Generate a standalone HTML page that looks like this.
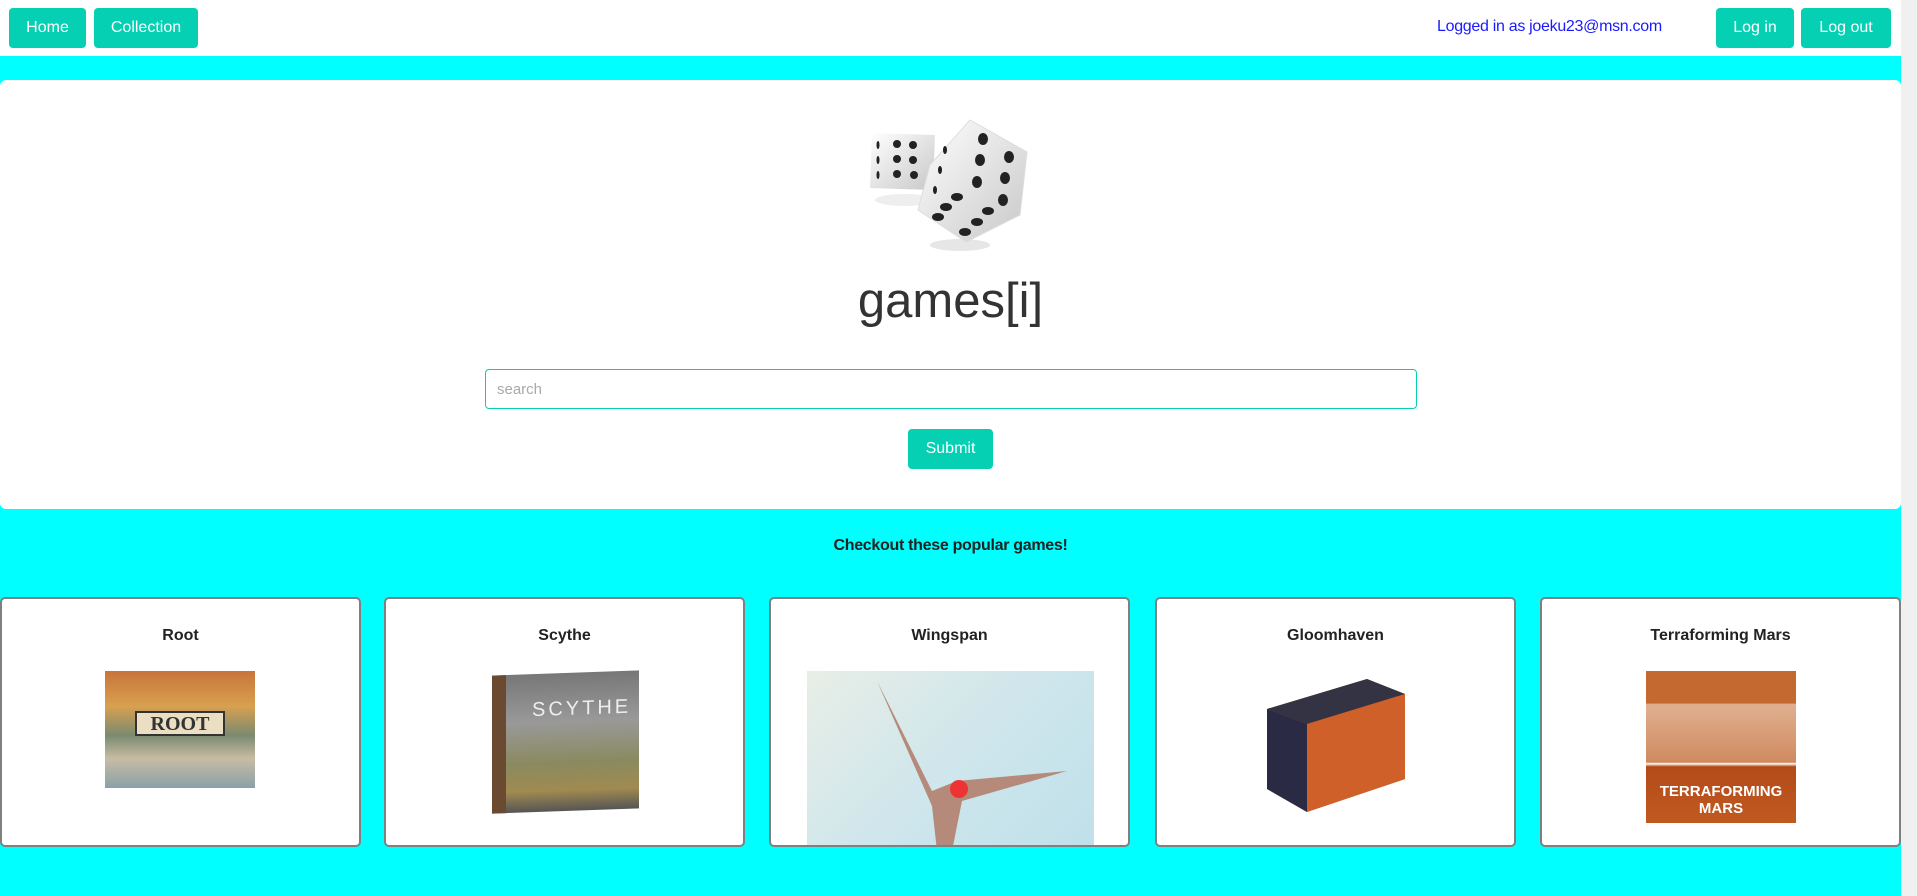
<!DOCTYPE html>
<html><head><meta charset="utf-8"><style>
*{box-sizing:border-box;margin:0;padding:0}
html,body{width:1917px;height:896px;overflow:hidden;font-family:"Liberation Sans",sans-serif;background:#00ffff;position:relative}
.abs{position:absolute}
.nav{left:0;top:0;width:1901px;height:56px;background:#fff}
.btn{position:absolute;background:#05d0b3;color:#fff;border-radius:4px;font-size:16px;display:flex;align-items:center;justify-content:center}
.sb{left:1901px;top:0;width:16px;height:896px;background:#f0f0f0}
.hero{left:0;top:80px;width:1901px;height:429px;background:#fff;border-radius:6px}
.card{position:absolute;top:597px;width:361px;height:250px;background:#fff;border:2px solid #808080;border-radius:5px;overflow:hidden}
.card h3{position:absolute;top:28px;width:100%;text-align:center;font-size:16px;color:#222;font-weight:bold}
.img{position:absolute}
</style></head><body>
<div class="abs nav"></div>
<div class="btn" style="left:9px;top:8px;width:77px;height:40px">Home</div>
<div class="btn" style="left:94px;top:8px;width:104px;height:40px">Collection</div>
<div class="abs" style="left:1437px;top:18px;font-size:16px;color:#1a1aff;white-space:nowrap;letter-spacing:-0.3px">Logged in as joeku23@msn.com</div>
<div class="btn" style="left:1716px;top:8px;width:78px;height:40px">Log in</div>
<div class="btn" style="left:1801px;top:8px;width:90px;height:40px">Log out</div>
<div class="abs sb"></div>
<div class="abs hero"></div>
<svg class="abs" style="left:860px;top:115px" width="180" height="140" viewBox="860 115 180 140">
<defs><linearGradient id="g" x1="0" y1="0" x2="1" y2="1"><stop offset="0" stop-color="#fff"/><stop offset="1" stop-color="#c8c8c8"/></linearGradient></defs>
<ellipse cx="905" cy="200" rx="30" ry="6" fill="#eee"/>
<ellipse cx="960" cy="245" rx="30" ry="6" fill="#e6e6e6"/>
<polygon points="872,133 935,135 933,190 870,188" fill="url(#g)"/>
<g fill="#222"><circle cx="897" cy="144" r="4"/><circle cx="913" cy="145" r="4"/><circle cx="897" cy="159" r="4"/><circle cx="913" cy="160" r="4"/><circle cx="897" cy="174" r="4"/><circle cx="914" cy="175" r="4"/><ellipse cx="878" cy="145" rx="1.5" ry="4"/><ellipse cx="878" cy="160" rx="1.5" ry="4"/><ellipse cx="878" cy="175" rx="1.5" ry="4"/></g>
<polygon points="970,120 1027,152 1020,215 966,242 918,210 930,165" fill="url(#g)" stroke="#ddd"/>
<g fill="#222"><ellipse cx="983" cy="139" rx="5" ry="6"/><ellipse cx="1009" cy="157" rx="5" ry="6"/><ellipse cx="980" cy="160" rx="5" ry="6"/><ellipse cx="1005" cy="178" rx="5" ry="6"/><ellipse cx="977" cy="182" rx="5" ry="6"/><ellipse cx="1003" cy="200" rx="5" ry="6"/><ellipse cx="957" cy="197" rx="6" ry="4"/><ellipse cx="946" cy="207" rx="6" ry="4"/><ellipse cx="938" cy="217" rx="6" ry="4"/><ellipse cx="988" cy="211" rx="6" ry="4"/><ellipse cx="977" cy="222" rx="6" ry="4"/><ellipse cx="965" cy="232" rx="6" ry="4"/><ellipse cx="945" cy="150" rx="2" ry="4"/><ellipse cx="940" cy="170" rx="2" ry="4"/><ellipse cx="935" cy="190" rx="2" ry="4"/></g>
</svg>
<div class="abs" style="left:0;top:273px;width:1901px;text-align:center;font-size:49px;color:#333">games[i]</div>
<div class="abs" style="left:485px;top:369px;width:932px;height:40px;border:1px solid #05d0b3;border-radius:4px;background:#fff;font-size:15px;color:#aaa;padding:11px 11px">search</div>
<div class="btn" style="left:908px;top:429px;width:85px;height:40px">Submit</div>
<div class="abs" style="left:0;top:537px;width:1901px;text-align:center;font-size:16px;font-weight:bold;color:#222;letter-spacing:-0.3px">Checkout these popular games!</div>

<div class="card" style="left:0"><h3>Root</h3>
<div class="img" style="left:103px;top:72px;width:150px;height:117px;background:linear-gradient(180deg,#c9743a 0%,#d9a050 30%,#7a8a70 55%,#c7bda3 75%,#8aa0a8 100%)"><div style="position:absolute;left:30px;top:40px;width:90px;height:25px;background:#eadfc2;border:2px solid #333;font:bold 20px 'Liberation Serif',serif;text-align:center;line-height:22px;color:#333">ROOT</div></div></div>
<div class="card" style="left:384px"><h3>Scythe</h3>
<div class="img" style="left:106px;top:74px;width:147px;height:138px;background:linear-gradient(180deg,#777 0%,#999 35%,#8a8a60 65%,#a08a50 85%,#555 100%);transform:skewY(-2deg)"><div style="position:absolute;left:0;top:0;width:14px;height:100%;background:#6a4a30"></div><div style="position:absolute;left:40px;top:25px;color:#eee;font-size:20px;letter-spacing:3px">SCYTHE</div></div></div>
<div class="card" style="left:769px"><h3>Wingspan</h3>
<div class="img" style="left:36px;top:72px;width:287px;height:180px;background:linear-gradient(135deg,#e8eee6 0%,#cfe6ec 50%,#bfe0ea 100%)"><svg width="287" height="180"><path d="M70 10 L125 120 L150 110 L260 100 L155 130 L145 180 L130 180 L125 135 Z" fill="#b58a7a"/><circle cx="152" cy="118" r="9" fill="#e33"/></svg></div></div>
<div class="card" style="left:1155px"><h3>Gloomhaven</h3>
<svg class="img" style="left:110px;top:80px" width="140" height="135"><polygon points="0,30 100,0 138,15 138,100 40,133 0,110" fill="#c04a1e"/><polygon points="0,30 100,0 138,15 40,45" fill="#334"/><polygon points="0,30 40,45 40,133 0,110" fill="#2a2a44"/><polygon points="40,45 138,15 138,100 40,133" fill="#d0602a"/></svg></div>
<div class="card" style="left:1540px"><h3>Terraforming Mars</h3>
<div class="img" style="left:104px;top:72px;width:150px;height:152px;background:linear-gradient(180deg,#c46a30 0%,#c46a30 21%,#e0b090 22%,#d08a60 60%,#fff 61%,#b34a1a 63%,#c05a20 100%)"><div style="position:absolute;left:0;top:112px;width:100%;text-align:center;color:#fff;font-weight:bold;font-size:15px;line-height:17px">TERRAFORMING<br>MARS</div></div></div>
</body></html>
